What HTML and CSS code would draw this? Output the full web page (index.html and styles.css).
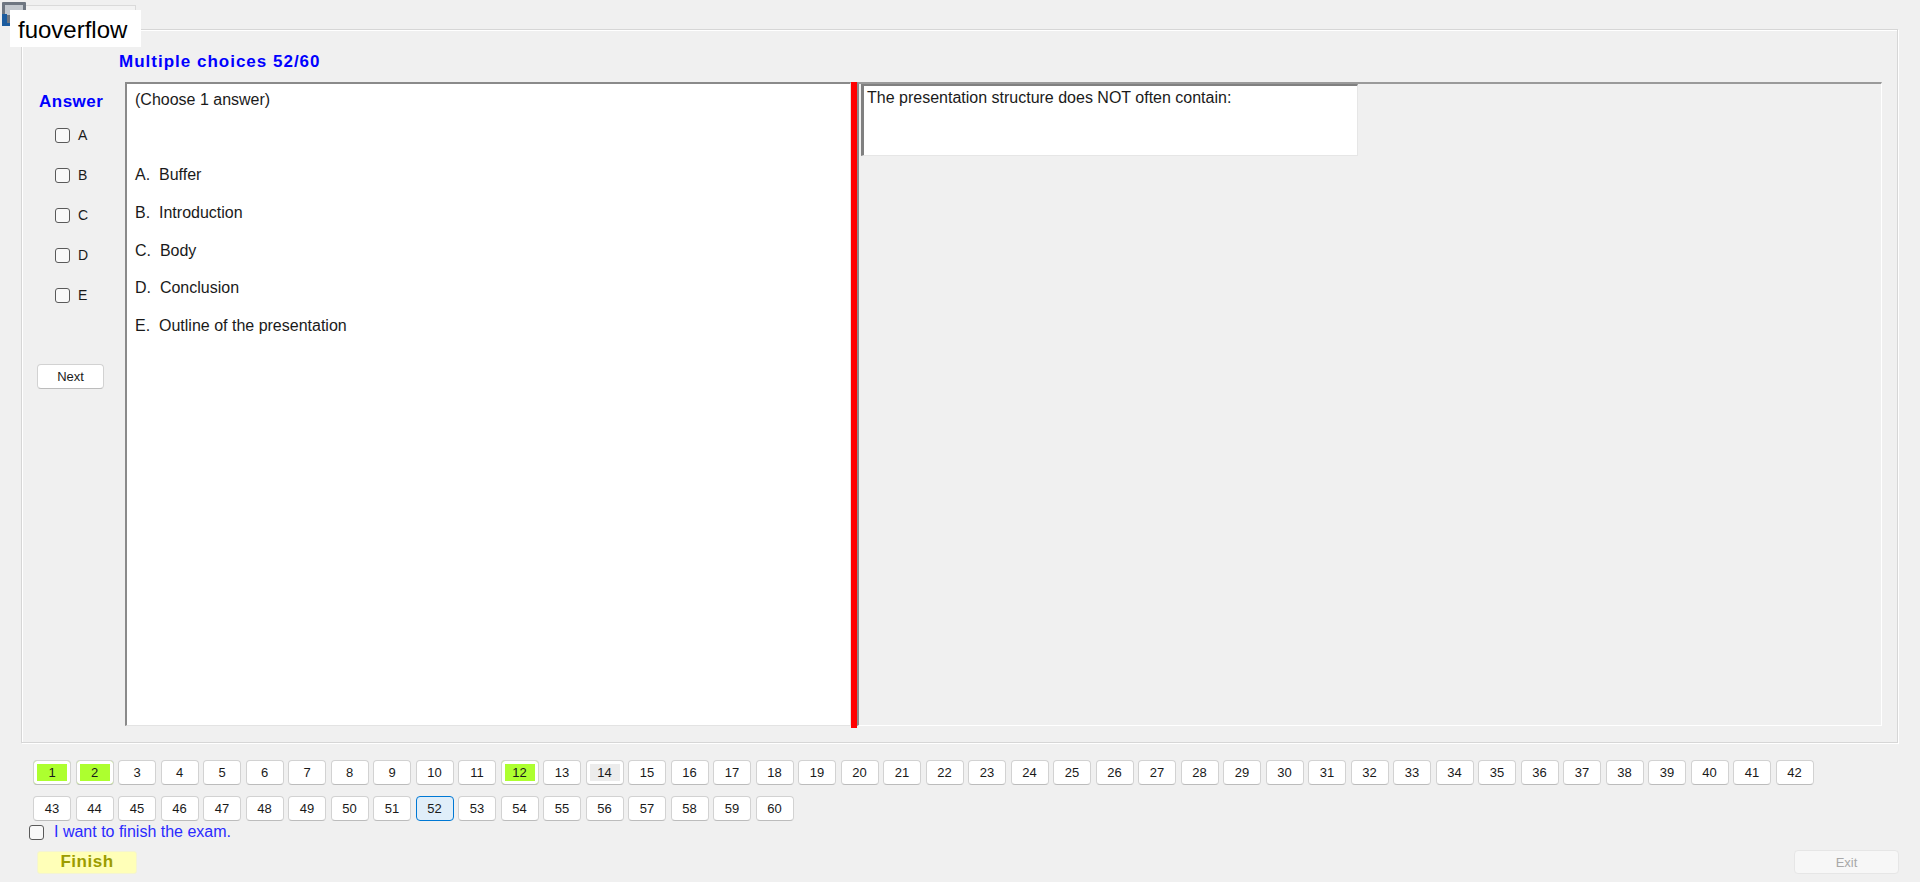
FILE: index.html
```html
<!DOCTYPE html>
<html>
<head>
  <meta charset="utf-8">
  <title>Exam client</title>
  <link rel="stylesheet" href="styles.css">
</head>
<body>
  <div class="brand">
    <div class="brand-tab"></div>
    <svg class="brand-icon" width="26" height="26" viewBox="0 0 26 26">
      <rect x="1" y="1" width="24" height="24" rx="1" fill="#6e7681"/>
      <rect x="4" y="4" width="18" height="10" fill="#c3c8ce"/>
      <path d="M1 13 H6 V22 H25 V25 H1 Z" fill="#1c5c9f"/>
    </svg>
    <span class="brand-name">fuoverflow</span>
  </div>

  <div class="exam-frame">
    <h1 class="exam-title">Multiple choices 52/60</h1>

    <div class="exam-body">
      <div class="answer-pane">
        <div class="answer-label">Answer</div>
        <label class="answer-option"><input type="checkbox"><span>A</span></label>
        <label class="answer-option"><input type="checkbox"><span>B</span></label>
        <label class="answer-option"><input type="checkbox"><span>C</span></label>
        <label class="answer-option"><input type="checkbox"><span>D</span></label>
        <label class="answer-option"><input type="checkbox"><span>E</span></label>
        <button class="btn next-btn">Next</button>
      </div>

      <div class="options-panel">
        <p class="choose-hint">(Choose 1 answer)</p>
        <ul class="option-list">
          <li>A.&nbsp; Buffer</li>
          <li>B.&nbsp; Introduction</li>
          <li>C.&nbsp; Body</li>
          <li>D.&nbsp; Conclusion</li>
          <li>E.&nbsp; Outline of the presentation</li>
        </ul>
      </div>

      <div class="splitter"></div>

      <div class="question-panel">
        <div class="question-box">The presentation structure does NOT often contain:</div>
      </div>
    </div>
  </div>

  <div class="nav-grid">
    <button class="btn num-btn answered">1</button>
    <button class="btn num-btn answered">2</button>
    <button class="btn num-btn">3</button>
    <button class="btn num-btn">4</button>
    <button class="btn num-btn">5</button>
    <button class="btn num-btn">6</button>
    <button class="btn num-btn">7</button>
    <button class="btn num-btn">8</button>
    <button class="btn num-btn">9</button>
    <button class="btn num-btn">10</button>
    <button class="btn num-btn">11</button>
    <button class="btn num-btn answered">12</button>
    <button class="btn num-btn">13</button>
    <button class="btn num-btn visited">14</button>
    <button class="btn num-btn">15</button>
    <button class="btn num-btn">16</button>
    <button class="btn num-btn">17</button>
    <button class="btn num-btn">18</button>
    <button class="btn num-btn">19</button>
    <button class="btn num-btn">20</button>
    <button class="btn num-btn">21</button>
    <button class="btn num-btn">22</button>
    <button class="btn num-btn">23</button>
    <button class="btn num-btn">24</button>
    <button class="btn num-btn">25</button>
    <button class="btn num-btn">26</button>
    <button class="btn num-btn">27</button>
    <button class="btn num-btn">28</button>
    <button class="btn num-btn">29</button>
    <button class="btn num-btn">30</button>
    <button class="btn num-btn">31</button>
    <button class="btn num-btn">32</button>
    <button class="btn num-btn">33</button>
    <button class="btn num-btn">34</button>
    <button class="btn num-btn">35</button>
    <button class="btn num-btn">36</button>
    <button class="btn num-btn">37</button>
    <button class="btn num-btn">38</button>
    <button class="btn num-btn">39</button>
    <button class="btn num-btn">40</button>
    <button class="btn num-btn">41</button>
    <button class="btn num-btn">42</button>
    <button class="btn num-btn">43</button>
    <button class="btn num-btn">44</button>
    <button class="btn num-btn">45</button>
    <button class="btn num-btn">46</button>
    <button class="btn num-btn">47</button>
    <button class="btn num-btn">48</button>
    <button class="btn num-btn">49</button>
    <button class="btn num-btn">50</button>
    <button class="btn num-btn">51</button>
    <button class="btn num-btn current">52</button>
    <button class="btn num-btn">53</button>
    <button class="btn num-btn">54</button>
    <button class="btn num-btn">55</button>
    <button class="btn num-btn">56</button>
    <button class="btn num-btn">57</button>
    <button class="btn num-btn">58</button>
    <button class="btn num-btn">59</button>
    <button class="btn num-btn">60</button>
  </div>

  <label class="finish-check"><input type="checkbox"><span>I want to finish the exam.</span></label>

  <div class="action-row">
    <button class="btn finish-btn">Finish</button>
    <button class="btn exit-btn">Exit</button>
  </div>
</body>
</html>
```

FILE: styles.css
```css
* {
  box-sizing: border-box;
}

body {
  margin: 0;
  height: 882px;
  overflow: hidden;
  background: #f0f0f0;
  font-family: "Liberation Sans", Arial, sans-serif;
  color: #000;
}

/* watermark in the top-left corner, drawn over the window */
.brand {
  position: absolute;
  top: 0;
  left: 0;
  width: 141px;
  height: 47px;
}

.brand-tab {
  position: absolute;
  top: 5px;
  left: 25px;
  width: 111px;
  height: 26px;
  background: #f3f3f3;
  border: 1px solid #dadada;
}

.brand-icon {
  position: absolute;
  top: 1px;
  left: 1px;
}

.brand-name {
  position: absolute;
  top: 10px;
  left: 10px;
  width: 131px;
  height: 37px;
  padding: 3px 0 0 8px;
  background: #fff;
  font-size: 24px;
  line-height: 34px;
  color: #000;
}

/* group box holding the question */
.exam-frame {
  margin: 29px 22px 0 21px;
  height: 714px;
  padding: 23px 15px 0 0;
  border: 1px solid #d6d6d6;
  box-shadow: inset 1px 1px 0 #fff, 1px 1px 0 #fff;
}

.exam-title {
  margin: 0 0 11px 97px;
  font-size: 17px;
  line-height: 18px;
  font-weight: bold;
  letter-spacing: 1px;
  color: #0000ff;
}

.exam-body {
  display: flex;
  height: 644px;
}

.answer-pane {
  width: 103px;
  flex-shrink: 0;
  display: flex;
  flex-direction: column;
  padding-top: 10px;
}

.answer-label {
  margin: 0 0 3px 17px;
  font-size: 17px;
  line-height: 20px;
  font-weight: bold;
  letter-spacing: 0.5px;
  color: #0000ff;
}

.answer-option {
  height: 40px;
  display: flex;
  align-items: center;
  gap: 8px;
  padding-left: 33px;
  font-size: 14px;
  color: #1a1a1a;
}

input[type="checkbox"] {
  appearance: none;
  -webkit-appearance: none;
  margin: 0;
  width: 15px;
  height: 15px;
  border: 1px solid #5a5a5a;
  border-radius: 3px;
  background: #f9f9f9;
}

.btn {
  font-family: "Liberation Sans", Arial, sans-serif;
  background: #fff;
  border: 1px solid #d2d2d2;
  border-bottom-color: #bcbcbc;
  border-radius: 4px;
  color: #1a1a1a;
  padding: 0;
  cursor: pointer;
}

.next-btn {
  margin: 49px 0 0 15px;
  width: 67px;
  height: 25px;
  font-size: 13px;
}

.options-panel {
  width: 726px;
  flex-shrink: 0;
  padding: 7px 8px 0 8px;
  background: #fff;
  border: 1px solid #e3e3e3;
  border-top: 2px solid #8a8a8a;
  border-left: 2px solid #8a8a8a;
}

.choose-hint {
  margin: 0;
  font-size: 16px;
  line-height: 18px;
  color: #1a1a1a;
}

.option-list {
  list-style: none;
  margin: 47px 0 0;
  padding: 0;
}

.option-list li {
  font-size: 16px;
  line-height: 37.75px;
  color: #1a1a1a;
  white-space: pre;
}

.splitter {
  width: 6px;
  height: 646px;
  flex-shrink: 0;
  background: #ff0000;
}

.question-panel {
  flex: 1;
  padding: 0 0 0 2px;
  background: #f0f0f0;
  border: 1px solid #fff;
  border-top: 2px solid #9a9a9a;
  border-left: 2px solid #8a8a8a;
}

.question-box {
  width: 497px;
  height: 72px;
  padding: 3px 3px;
  background: #fff;
  border: 1px solid #e6e6e6;
  border-top: 2px solid #808080;
  border-left: 3px solid #808080;
  font-size: 16px;
  line-height: 18px;
  color: #1a1a1a;
}

/* question navigator */
.nav-grid {
  display: grid;
  grid-template-columns: repeat(42, 38px);
  column-gap: 4.5px;
  row-gap: 11px;
  margin: 17px 0 0 33px;
}

.num-btn {
  height: 25px;
  font-size: 13px;
  line-height: 23px;
}

.num-btn.answered {
  background: #adff2f;
  box-shadow: inset 0 0 0 3px #fff;
}

.num-btn.visited {
  background: #ececec;
  box-shadow: inset 0 0 0 3px #fff;
}

.num-btn.current {
  background: #e0eef9;
  border: 1px solid #0078d4;
}

.finish-check {
  display: flex;
  align-items: center;
  gap: 10px;
  margin: 3px 0 0 29px;
  height: 16px;
  font-size: 16px;
  color: #2a2aff;
}

.action-row {
  display: flex;
  justify-content: space-between;
  align-items: center;
  margin-top: 10px;
  padding: 0 21px 0 37px;
}

.finish-btn {
  width: 100px;
  height: 23px;
  background: #ffffb8;
  border: 1px solid #f4f4d4;
  border-radius: 3px;
  font-size: 17px;
  font-weight: bold;
  letter-spacing: 0.5px;
  color: #9c9c00;
}

.exit-btn {
  width: 105px;
  height: 24px;
  background: #f7f7f7;
  border: 1px solid #e6e6e6;
  font-size: 13px;
  color: #a8a8a8;
}
```
